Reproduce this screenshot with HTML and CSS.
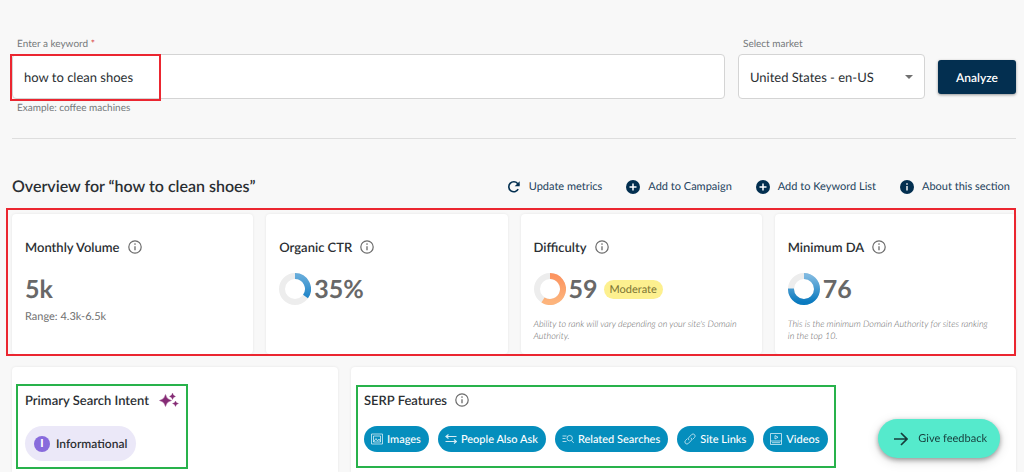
FILE: index.html
```html
<!DOCTYPE html>
<html lang="en">
<head>
<meta charset="utf-8">
<meta name="viewport" content="width=device-width, initial-scale=1">
<title>Keyword Overview</title>
<link rel="stylesheet" href="styles.css">
</head>
<body>
<svg class="defs" aria-hidden="true">
  <defs>
    <linearGradient id="blue" x1="0" y1="0" x2="0" y2="1"><stop offset="0" stop-color="#7db8e0"/><stop offset="1" stop-color="#0a7abf"/></linearGradient>
    <linearGradient id="blue-short" x1="0" y1="0" x2="0" y2="1"><stop offset="0" stop-color="#64abda"/><stop offset="1" stop-color="#2185c8"/></linearGradient>
    <linearGradient id="orange" x1="0" y1="0" x2="0" y2="1"><stop offset="0" stop-color="#fc9460"/><stop offset="1" stop-color="#fdb47c"/></linearGradient>
    <symbol id="info" viewBox="0 0 14 14"><circle cx="7" cy="7" r="6.2" fill="none" stroke="currentColor" stroke-width="1.2"/><path d="M7 6.2v4" stroke="currentColor" stroke-width="1.3"/><circle cx="7" cy="4.1" r=".8" fill="currentColor"/></symbol>
    <symbol id="plus" viewBox="0 0 14 14"><circle cx="7" cy="7" r="7" fill="currentColor"/><path d="M7 3.5v7M3.5 7h7" stroke="#fff" stroke-width="1.5"/></symbol>
  </defs>
</svg>
<main class="page">
  <form class="search">
    <div class="field field-keyword">
      <label for="keyword">Enter a keyword <span class="required">*</span></label>
      <div class="control">
        <input id="keyword" type="text" value="how to clean shoes">
        <span class="mark mark-keyword"></span>
      </div>
      <span class="hint">Example: coffee machines</span>
    </div>
    <div class="field field-market">
      <label for="market">Select market</label>
      <div class="control">
        <select id="market"><option>United States - en-US</option></select>
        <svg class="caret" viewBox="0 0 8 4"><path d="M0 0h8L4 4z" fill="currentColor"/></svg>
      </div>
    </div>
    <button class="analyze" type="button">Analyze</button>
  </form>

  <header class="overview">
    <h1>Overview for “how to clean shoes”</h1>
    <div class="actions">
      <button type="button"><svg viewBox="0 0 14 14"><path d="M11.2 9.2A5 5 0 1 1 10.6 3.5L12 5" fill="none" stroke="currentColor" stroke-width="1.6"/><path d="M12.7 1.3v5H7.7z" fill="currentColor"/></svg>Update metrics</button>
      <button type="button"><svg><use href="#plus"/></svg>Add to Campaign</button>
      <button type="button"><svg><use href="#plus"/></svg>Add to Keyword List</button>
      <button type="button"><svg viewBox="0 0 14 14"><circle cx="7" cy="7" r="7" fill="currentColor"/><path d="M7 6v4.5M7 3.3v1.5" stroke="#fff" stroke-width="1.4"/></svg>About this section</button>
    </div>
  </header>

  <section class="metrics">
    <article class="card">
      <h2>Monthly Volume <svg class="info"><use href="#info"/></svg></h2>
      <div class="value">5k</div>
      <p class="range">Range: 4.3k-6.5k</p>
    </article>
    <article class="card">
      <h2>Organic CTR <svg class="info"><use href="#info"/></svg></h2>
      <div class="value"><svg class="ring" viewBox="0 0 32 32"><circle class="track" cx="16" cy="16" r="13"/><path class="arc-path" d="M16 3A13 13 0 0 1 26.500 23.600" stroke="url(#blue-short)"/></svg>35%</div>
    </article>
    <article class="card">
      <h2>Difficulty <svg class="info"><use href="#info"/></svg></h2>
      <div class="value"><svg class="ring" viewBox="0 0 32 32"><circle class="track" cx="16" cy="16" r="13"/><path class="arc-path" d="M16 3A13 13 0 1 1 9 26.950" stroke="url(#orange)"/></svg>59<span class="level">Moderate</span></div>
      <p class="note">Ability to rank will vary depending on your site's Domain Authority.</p>
    </article>
    <article class="card">
      <h2>Minimum DA <svg class="info"><use href="#info"/></svg></h2>
      <div class="value"><svg class="ring" viewBox="0 0 32 32"><circle class="track" cx="16" cy="16" r="13"/><path class="arc-path" d="M16 3A13 13 0 1 1 3 15.500" stroke="url(#blue)"/></svg>76</div>
      <p class="note">This is the minimum Domain Authority for sites ranking in the top 10.</p>
    </article>
    <span class="mark mark-metrics"></span>
  </section>

  <section class="details">
    <article class="card">
      <div class="group">
        <h2>Primary Search Intent <svg class="sparkle" viewBox="0 0 20 14"><path d="M6.500 1.500Q7.500 6.500 12.500 7.500Q7.500 8.500 6.500 13.500Q5.500 8.500 .5 7.500Q5.500 6.500 6.500 1.500z" fill="currentColor" stroke="currentColor" stroke-width=".4"/><path d="M13.500 0Q14 3 16.500 3.500Q14 4 13.500 6.500Q13 4 10.500 3.500Q13 3 13.500 0zM16.500 8Q17 10 19.500 10.500Q17 11 16.500 13.500Q16 11 13.500 10.500Q16 10 16.500 8z" fill="currentColor" stroke="currentColor" stroke-width=".3"/></svg></h2>
        <span class="intent"><span class="letter">I</span>Informational</span>
        <span class="mark mark-intent"></span>
      </div>
    </article>
    <article class="card">
      <div class="group">
        <h2>SERP Features <svg class="info"><use href="#info"/></svg></h2>
        <div class="chips">
          <span class="chip"><svg viewBox="0 0 12 12"><path d="M.5 1h11v10H.5zM2.500 3h7v6h-7zM2.500 9L5 5.500 6.500 8 8 6l1.500 2.500"/></svg>Images</span>
          <span class="chip"><svg viewBox="0 0 12 12"><path d="M1 3.500h10.500M.5 8.500H11M3.500 1.500L1 3.500 3.500 5.500M9 6.500l2.500 2L9 10.500" stroke-width="1.200"/></svg>People Also Ask</span>
          <span class="chip"><svg viewBox="0 0 12 12"><path d="M.5 3h4M.5 5.500h3M.5 8.500h4M9.500 7.500L11.800 10"/><circle cx="7.700" cy="5.200" r="2.700"/></svg>Related Searches</span>
          <span class="chip"><svg viewBox="0 0 12 12"><path d="M5 7.200a2 2 0 0 1 0-2.900L7.600 1.600a2 2 0 0 1 2.900 2.900L8.600 6.400M7 4.800a2 2 0 0 1 0 2.900L4.400 10.400A2 2 0 0 1 1.500 7.500L3.400 5.600"/></svg>Site Links</span>
          <span class="chip"><svg viewBox="0 0 12 12"><path d="M.5.5h11v11H.5zM.5 8h11M5 2.500v3.500L8 4.250zM2 9.700h8"/></svg>Videos</span>
        </div>
        <span class="mark mark-serp"></span>
      </div>
    </article>
  </section>
</main>
<button class="feedback" type="button"><svg viewBox="0 0 14 14"><path d="M0 7h12.500M7 1l6 6-6 6" fill="none" stroke="currentColor" stroke-width="1.700"/></svg>Give feedback</button>
</body>
</html>
```
FILE: styles.css
```css
* { box-sizing: border-box; }
body {
  margin: 0;
  background: #f8f8f8;
  color: #2b2f33;
  font-family: Lato, "Liberation Sans", sans-serif;
  font-size: 13px;
  text-rendering: geometricPrecision;
}
h1, h2, p { margin: 0; }
svg { flex: none; }
button, input, select { font: inherit; color: inherit; text-rendering: inherit; }
button { border: 0; background: none; padding: 0; cursor: pointer; }
.defs { position: absolute; width: 0; height: 0; }
.page {
  display: flex;
  flex-direction: column;
  min-height: 100vh;
  padding: 37px 8px 0 12px;
}

.search {
  display: flex;
  align-items: flex-start;
  gap: 13px;
  padding-bottom: 23px;
  border-bottom: 1px solid #dedede;
}
.field { display: flex; flex-direction: column; }
.field-keyword { flex: 1; }
.field-market { width: 187px; }
.field label, .hint {
  padding-left: 5px;
  font-size: 10px;
  line-height: 14px;
  color: #75787b;
}
.required { color: #d93a3f; }
.control { position: relative; margin: 3px 0 2px; }
.control input, .control select {
  display: block;
  width: 100%;
  height: 45px;
  padding: 0 11px;
  border: 1px solid #d4d4d4;
  border-radius: 4px;
  background: #fff;
  font-size: 13px;
  appearance: none;
}
.caret {
  position: absolute;
  right: 12px;
  top: 21px;
  width: 8px;
  height: 4px;
  color: #707070;
  pointer-events: none;
}
.analyze {
  width: 78px;
  height: 34px;
  margin-top: 23px;
  border-radius: 3px;
  background: #032f50;
  color: #fff;
  font-size: 12px;
  font-weight: 600;
  box-shadow: 0 1px 3px rgba(0, 0, 0, .4);
}

.overview {
  display: flex;
  align-items: center;
  justify-content: space-between;
  height: 75px;
  padding: 20px 6px 0 0;
}
h1 { font-size: 16px; line-height: 24px; font-weight: 600; }
.actions { display: flex; gap: 24px; }
.actions button {
  display: flex;
  align-items: center;
  gap: 8px;
  font-size: 11px;
  line-height: 16px;
  color: #24435d;
}
.actions svg { width: 14px; height: 14px; color: #032f50; }

.metrics {
  position: relative;
  display: grid;
  grid-template-columns: repeat(4, 1fr);
  gap: 13px;
}
.card {
  padding: 23px 13px 12px;
  border-radius: 4px;
  background: #fff;
  box-shadow: 0 0 3px rgba(0, 0, 0, .08);
}
.metrics .card { height: 140px; }
h2 {
  display: flex;
  align-items: center;
  gap: 8px;
  font-size: 13px;
  line-height: 20px;
  font-weight: 600;
}
.info { width: 14px; height: 14px; color: #6b6b6b; }
.value {
  display: flex;
  align-items: center;
  gap: 3px;
  height: 32px;
  margin-top: 16px;
  font-size: 25px;
  font-weight: 700;
  color: #686868;
}
.ring { width: 32px; height: 32px; }
.ring circle, .arc-path { fill: none; stroke-width: 6; }
.track { stroke: #ededed; }
.level {
  margin-left: 3px;
  padding: 0 6px;
  border-radius: 10px;
  background: #fdf08f;
  color: #7c7434;
  font-size: 11px;
  line-height: 19px;
  font-weight: 400;
}
.range { margin-top: 4px; font-size: 11px; line-height: 16px; color: #707070; }
.note {
  margin-top: 13px;
  padding-right: 8px;
  font-size: 9px;
  line-height: 12px;
  font-style: italic;
  font-weight: 300;
  color: #666;
}

.details {
  flex: 1;
  display: grid;
  grid-template-columns: 326fr 665fr;
  gap: 13px;
  margin-top: 13px;
}
.details .card {
  display: flex;
  align-items: flex-start;
  border-radius: 4px 4px 0 0;
  padding-bottom: 0;
}
.group { position: relative; }
.sparkle { width: 20px; height: 14px; margin-left: 2px; color: #852b75; }
.intent {
  display: inline-flex;
  align-items: center;
  gap: 6px;
  height: 35px;
  margin-top: 16px;
  padding: 0 9px;
  border-radius: 18px;
  background: #ebe8f8;
  font-size: 12px;
  font-weight: 600;
}
.letter {
  width: 16px;
  border-radius: 8px;
  background: #886bdc;
  color: #fff;
  font-size: 11px;
  line-height: 16px;
  font-weight: 900;
  text-align: center;
}
.chips { display: flex; gap: 9px; margin-top: 16px; }
.chip {
  display: flex;
  align-items: center;
  gap: 4px;
  height: 26px;
  padding: 0 8px 0 7px;
  border-radius: 13px;
  background: #058ebd;
  color: #fff;
  font-size: 11px;
  font-weight: 500;
  white-space: nowrap;
}
.chip svg { width: 12px; height: 12px; fill: none; stroke: #d5edf6; stroke-width: .8; }

.mark { position: absolute; border: 2px solid #eb2630; pointer-events: none; }
.mark-keyword { inset: 0 auto -2px -2px; width: 151px; }
.mark-metrics { inset: -6px 0 -2px -6px; }
.mark-intent { inset: -6px -9px -8px; border-color: #28b24b; }
.mark-serp { inset: -5px -8px -16px; border-color: #28b24b; }

.feedback {
  position: fixed;
  right: 24px;
  bottom: 14px;
  display: flex;
  align-items: center;
  gap: 10px;
  height: 39px;
  padding: 0 13px 0 16px;
  border-radius: 20px;
  background: #55eacc;
  color: #173c3b;
  font-size: 11px;
  box-shadow: 0 2px 5px rgba(0, 0, 0, .35), 0 3px 12px rgba(0, 0, 0, .15);
}
.feedback svg { width: 14px; height: 14px; }
```
